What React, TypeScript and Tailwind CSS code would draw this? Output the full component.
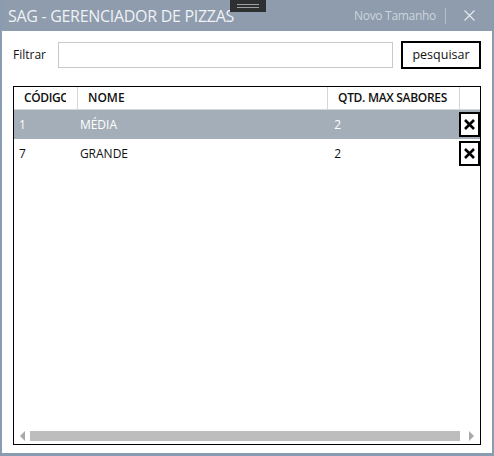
import React from 'react'

const rows = [
	{ codigo: '1', nome: 'MÉDIA', qtd: '2' },
	{ codigo: '7', nome: 'GRANDE', qtd: '2' },
]

function DeleteButton() {
	return (
		<button
			type="button"
			className="flex h-[25px] w-[21px] items-center justify-center border-2 border-black bg-white"
		>
			<svg width="13" height="13" viewBox="0 0 13 13">
				<title>excluir</title>
				<path d="M2 2L11 11M11 2L2 11" stroke="#000" strokeWidth={2.6} />
			</svg>
		</button>
	)
}

export default function App() {
	const selected = 0

	return (
		<div
			className="flex h-[456px] w-[494px] flex-col bg-[#8a9cb1] px-[2px] pb-[3px]"
			style={{ fontFamily: '"Open Sans", "Noto Sans", sans-serif' }}
		>
			{/* barra de título */}
			<div className="relative flex h-[31px] items-center bg-[#8e9cad] pl-[6px] pr-[17px]">
				<span className="text-[16px] tracking-[-0.3px] text-[#f0f2f5]">
					SAG - GERENCIADOR DE PIZZAS
				</span>
				<div className="absolute left-[228px] top-0 flex h-[12px] w-[36px] flex-col items-center justify-center gap-[2px] bg-[#2e2f31]">
					<div className="h-px w-[22px] bg-[#a0a0a0]" />
					<div className="h-px w-[22px] bg-[#a0a0a0]" />
				</div>
				<span className="ml-auto text-[12px] tracking-[-0.3px] text-[#cdd5de]">
					Novo Tamanho
				</span>
				<div className="ml-[9px] mr-[18px] h-[16px] w-px bg-[#b4bfcb]" />
				<svg width="11" height="11" viewBox="0 0 11 11">
					<title>fechar</title>
					<path d="M0.5 0.5L10.5 10.5M10.5 0.5L0.5 10.5" stroke="#e8ecf0" strokeWidth={1.1} />
				</svg>
			</div>

			{/* conteúdo */}
			<div className="flex flex-1 flex-col bg-white px-[11px] pb-[8px]">
				<div className="mt-[10px] flex items-center">
					<span className="w-[45px] text-[12px] text-[#111]">Filtrar</span>
					<input
						type="text"
						className="h-[26px] w-[335px] border border-[#c9c9c9] outline-none"
					/>
					<button
						type="button"
						className="ml-auto h-[28px] w-[80px] border-2 border-black bg-white text-[12.5px] text-[#111]"
					>
						pesquisar
					</button>
				</div>

				{/* grade */}
				<div className="mt-[17px] flex flex-1 flex-col border border-black text-[12px]">
					<div className="flex h-[23px] border-b border-[#d6d6d6] font-semibold text-[#111]">
						<div className="flex w-[64px] items-center border-r border-[#d6d6d6] pl-[10px] tracking-[-0.4px]">
							<span className="block w-[42px] overflow-hidden whitespace-nowrap">CÓDIGO</span>
						</div>
						<div className="flex w-[250px] items-center border-r border-[#d6d6d6] pl-[10px]">
							NOME
						</div>
						<div className="flex w-[132px] items-center border-r border-[#d6d6d6] pl-[10px] tracking-[-0.3px]">
							QTD. MAX SABORES
						</div>
						<div className="flex-1" />
					</div>

					{rows.map((row, i) => (
						<div
							key={row.codigo}
							className={`flex h-[29px] items-center ${
								i === selected ? 'bg-[#a4aeb8] text-white' : 'text-[#111]'
							}`}
						>
							<div className="w-[64px] pl-[5px]">{row.codigo}</div>
							<div className="w-[250px] pl-[2px]">{row.nome}</div>
							<div className="w-[132px] pl-[7px]">{row.qtd}</div>
							<DeleteButton />
						</div>
					))}

					<div className="flex-1" />

					{/* barra de rolagem */}
					<div className="mb-[2px] flex h-[12px] items-center px-[5px]">
						<svg width="7" height="10" viewBox="0 0 7 10">
							<title>esquerda</title>
							<path d="M6 0L1 5L6 10Z" fill="#a9a9a9" />
						</svg>
						<div className="ml-[4px] mr-[8px] h-[10px] flex-1 bg-[#bdbdbd]" />
						<svg width="7" height="10" viewBox="0 0 7 10">
							<title>direita</title>
							<path d="M1 0L6 5L1 10Z" fill="#a9a9a9" />
						</svg>
					</div>
				</div>
			</div>
		</div>
	)
}
